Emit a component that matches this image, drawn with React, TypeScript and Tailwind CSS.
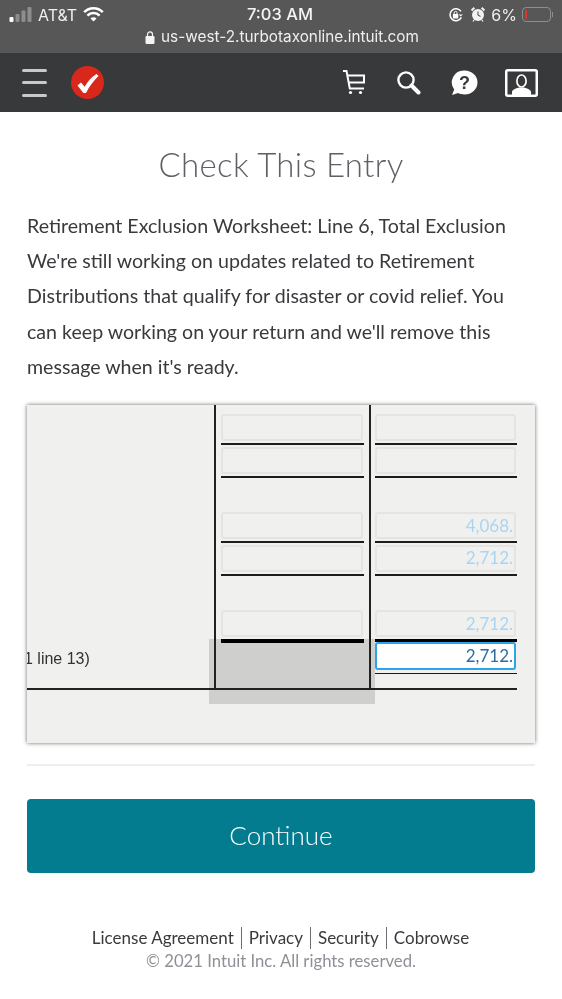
import { ReactNode } from "react";

const sans = "font-['Lato','Open_Sans',sans-serif]";

function StatusBar() {
  return (
    <div className="flex h-[26px] items-center justify-between pl-[9px] pr-[9px] pt-[3px] font-['Inter',sans-serif] text-white">
      <div className="flex items-center">
        <svg width="24" height="15" viewBox="0 0 24 15" className="mr-[5px]">
          <rect x="0.5" y="10" width="4" height="5" rx="1" fill="#fff" />
          <rect x="6.5" y="7" width="4" height="8" rx="1" fill="#8d8d8d" />
          <rect x="12.5" y="3.5" width="4" height="11.5" rx="1" fill="#8d8d8d" />
          <rect x="18.5" y="0" width="4" height="15" rx="1" fill="#8d8d8d" />
        </svg>
        <span className="text-[16px] leading-none text-[#f0f0f0]">AT&amp;T</span>
        <svg width="21" height="15" viewBox="0 0 21 15" className="ml-[6px]" fill="none" stroke="#fff" strokeWidth="2.5">
          <path d="M1.2 5.2a13 13 0 0 1 18.6 0" />
          <path d="M4.4 8.6a8.6 8.6 0 0 1 12.2 0" />
          <path d="M7.5 11.6a4.2 4.2 0 0 1 6 0L10.5 14.6z" fill="#fff" stroke="none" />
        </svg>
      </div>
      <span className="absolute left-[247px] text-[16.5px] font-medium leading-none text-[#f4f4f4]">7:03 AM</span>
      <div className="flex items-center">
        <svg width="14" height="14" viewBox="0 0 14 14" fill="none" className="mr-[8px]">
          <path d="M12.4 9.400A6 6 0 1 1 12 3.400" stroke="#fff" strokeWidth="1.5" />
          <path d="M13.8 6.400 11.700 8.600 9.800 6.400z" fill="#fff" />
          <rect x="3.900" y="6" width="5.400" height="4.400" rx="0.6" fill="#fff" />
          <path d="M5.200 6.300V4.800a1.400 1.400 0 0 1 2.800 0v1.500" stroke="#fff" strokeWidth="1" />
        </svg>
        <svg width="14" height="15" viewBox="0 0 14 15" className="mr-[6px]">
          <circle cx="7" cy="8" r="6" fill="#f2f2f2" />
          <path d="M7 4.500V8l2.500 1.400" stroke="#555" strokeWidth="1.100" fill="none" />
          <path d="M0.500 3.400 3.400 0.800M13.500 3.400 10.600 0.800" stroke="#f2f2f2" strokeWidth="2" />
          <path d="M3 13l-1 1.500M11 13l1 1.500" stroke="#f2f2f2" strokeWidth="1.300" />
        </svg>
        <span className="text-[16px] leading-none text-[#f0f0f0]">6%</span>
        <div className="ml-[5px] flex items-center">
          <div className="flex h-[15px] w-[29px] items-center rounded-[4px] border border-[#8e8e8e] pl-[2px]">
            <div className="h-[9px] w-[2px] rounded-[1px] bg-[#e5332a]" />
          </div>
          <div className="ml-[1px] h-[5px] w-[1px] bg-[#8e8e8e]" />
        </div>
      </div>
    </div>
  );
}

function UrlBar() {
  return (
    <div className="flex h-[27px] items-center justify-center pb-[5px] pl-[2px]">
      <svg width="10" height="13" viewBox="0 0 10 13" className="mr-[6px]">
        <rect x="0.5" y="5" width="9" height="8" rx="1.200" fill="#f4f4f4" />
        <path d="M2.500 5.500V3.400a2.500 2.500 0 0 1 5 0v2.100" stroke="#f4f4f4" strokeWidth="1.200" fill="none" />
      </svg>
      <span className="font-['Inter',sans-serif] text-[15.3px] leading-none text-[#efefef]">us-west-2.turbotaxonline.intuit.com</span>
    </div>
  );
}

function NavBar() {
  return (
    <div className="flex h-[59px] items-center bg-[#38393b] pl-[22px] pr-[24px]">
      <div className="flex w-[25px] flex-col gap-[9.5px]">
        <div className="h-[3px] rounded-full bg-[#c9c9c9]" />
        <div className="h-[3px] rounded-full bg-[#c9c9c9]" />
        <div className="h-[3px] rounded-full bg-[#c9c9c9]" />
      </div>
      <svg width="33" height="33" viewBox="0 0 33 33" className="ml-[24px]">
        <circle cx="16.500" cy="16.500" r="16.500" fill="#d8281c" />
        <path d="M6.500 19.500l3.500-3 3.700 4.200C16.600 15.600 20.500 11 25.500 8l2 2C22.600 14.600 18.500 20.200 15 27h-2.600z" fill="#fff" />
      </svg>
      {/* cart */}
      <svg width="24" height="25" viewBox="0 0 24 25" fill="none" stroke="#fff" strokeWidth="2" className="ml-auto">
        <path d="M1 1h3.500l3.300 17.500H22" />
        <path d="M5.500 5.500H22v7H6.700" />
        <circle cx="8.500" cy="22.500" r="1.600" fill="#fff" stroke="none" />
        <circle cx="18.500" cy="22.500" r="1.600" fill="#fff" stroke="none" />
      </svg>
      <svg width="25" height="25" viewBox="0 0 25 25" fill="none" className="ml-[30px]">
        <circle cx="10" cy="10" r="7.600" stroke="#fff" strokeWidth="2.400" />
        <path d="M15.500 15.500l7 7" stroke="#fff" strokeWidth="4" strokeLinecap="round" />
      </svg>
      <svg width="27" height="26" viewBox="0 0 27 26" className="ml-[30px]">
        <path d="M13.500 0.500a13 12 0 0 1 0 24c-2.500 0-4.500-.4-6.400-1.400L1 25l2.200-5.400A12 12 0 0 1 13.500.5z" fill="#fff" />
        <text x="13.500" y="19" textAnchor="middle" fontSize="18" fontWeight="700" fontFamily="Liberation Sans, sans-serif" fill="#38393b">?</text>
      </svg>
      <svg width="33" height="28" viewBox="0 0 33 28" className="ml-[27px]" fill="none">
        <rect x="1.250" y="1.250" width="30.500" height="25.500" rx="1.500" stroke="#fff" strokeWidth="2.500" />
        <path d="M7 26v-3c0-2.200 3.800-3.400 6.800-4.500h5.400c3 1.100 6.800 2.300 6.800 4.500v3z" fill="#fff" />
        <ellipse cx="16.500" cy="12" rx="4.600" ry="6" stroke="#fff" strokeWidth="1.700" fill="#38393b" />
      </svg>
    </div>
  );
}

function Field({ value, active }: { value?: string; active?: boolean }) {
  return (
    <div
      className={
        active
          ? "flex h-[28px] items-center justify-end rounded-[3px] border-2 border-[#2ba4ea] bg-white pr-[1px] font-['Lato',sans-serif] text-[17px] text-[#2a6ea6]"
          : "flex h-[27px] items-center justify-end rounded-[3px] border-2 border-[#e4e4e2] pr-[1px] font-['Lato',sans-serif] text-[17px] text-[#a9d5f2]"
      }
    >
      {value}
    </div>
  );
}

function Rule({ className = "" }: { className?: string }) {
  return <div className={`bg-[#1c1c1c] ${className}`} />;
}

function Column({ children, className }: { children: ReactNode; className: string }) {
  return <div className={`flex flex-col border-l-2 border-[#222] pt-[9px] ${className}`}>{children}</div>;
}

function FormPanel() {
  return (
    <div className="relative h-[338px] overflow-hidden bg-[#f0f0ef] shadow-[0_0_4px_rgba(0,0,0,0.6)]">
      <div className="absolute left-[182px] top-[234px] h-[65px] w-[166px] bg-[#dcdcdc] mix-blend-multiply" />
      <div className="relative flex h-[285px] w-[490px] border-b-[2px] border-[#222]">
        <div className="flex w-[187px] items-end pb-[19px] font-['Liberation_Sans',sans-serif] text-[16px] leading-[20px] text-[#333]">
          <span className="ml-[-3px]">1 line 13)</span>
        </div>
        <Column className="w-[155px] pl-[5px]">
          <div className="w-[142px]"><Field /></div>
          <Rule className="mt-[2px] h-[2px] w-[143px]" />
          <div className="mt-[2px] w-[142px]"><Field /></div>
          <Rule className="mt-[2px] h-[1.5px] w-[143px]" />
          <div className="mt-[34.5px] w-[142px]"><Field /></div>
          <Rule className="mt-[2px] h-[1.5px] w-[143px]" />
          <div className="mt-[2px] w-[142px]"><Field /></div>
          <Rule className="mt-[2.5px] h-[1.5px] w-[143px]" />
          <div className="mt-[34.5px] w-[142px]"><Field /></div>
          <Rule className="mt-[2px] h-[4px] w-[143px] bg-black" />
        </Column>
        <Column className="flex-1 pl-[4px]">
          <div className="w-[141px]"><Field /></div>
          <Rule className="mt-[2px] h-[2px] w-[142px]" />
          <div className="mt-[2px] w-[141px]"><Field /></div>
          <Rule className="mt-[2px] h-[1.5px] w-[142px]" />
          <div className="mt-[34.5px] w-[141px]"><Field value="4,068." /></div>
          <Rule className="mt-[2px] h-[1.5px] w-[142px]" />
          <div className="mt-[2px] w-[141px]"><Field value="2,712." /></div>
          <Rule className="mt-[2.5px] h-[1.5px] w-[142px]" />
          <div className="mt-[34.5px] w-[141px]"><Field value="2,712." /></div>
          <Rule className="mt-[2px] h-[3px] w-[142px] bg-black" />
          <div className="w-[141px]"><Field value="2,712." active /></div>
          <Rule className="mt-[2.5px] h-[1.5px] w-[142px]" />
        </Column>
      </div>
    </div>
  );
}

export default function App() {
  return (
    <div className={`relative h-[999px] w-[562px] overflow-hidden bg-white ${sans}`}>
      <div className="bg-[#575757]">
        <StatusBar />
        <UrlBar />
      </div>
      <NavBar />
      <main className="px-[27px]">
        <h1 className="mt-[30px] text-center text-[33px] font-light leading-[44px] tracking-[0.3px] text-[#5f6066]">Check This Entry</h1>
        <p className="mt-[21.5px] text-[19.6px] leading-[35.4px] text-[#393a3d]">
          Retirement Exclusion Worksheet: Line 6, Total Exclusion
          <br />
          We're still working on updates related to Retirement Distributions that qualify for disaster or covid relief. You can keep working on your return and we'll remove this message when it's ready.
        </p>
        <div className="mt-[20.5px]">
          <FormPanel />
        </div>
        <div className="mt-[21px] h-[2px] bg-[#eeeeee]" />
        <button className="mt-[33px] h-[74px] w-full rounded-[4px] bg-[#047c8f] pb-[2px] text-[26px] font-light text-white">Continue</button>
        <div className="mt-[54px] flex items-center justify-center pr-[1px] text-[17px] leading-[22px] text-[#393a3d]">
          <span className="pr-[7px]">License Agreement</span>
          <span className="border-l border-[#6b6c72] px-[7px]">Privacy</span>
          <span className="border-l border-[#6b6c72] px-[7px]">Security</span>
          <span className="border-l border-[#6b6c72] pl-[7px]">Cobrowse</span>
        </div>
        <p className="mt-[1px] text-center text-[16.7px] leading-[22px] text-[#8d9096]">© 2021 Intuit Inc. All rights reserved.</p>
      </main>
    </div>
  );
}
